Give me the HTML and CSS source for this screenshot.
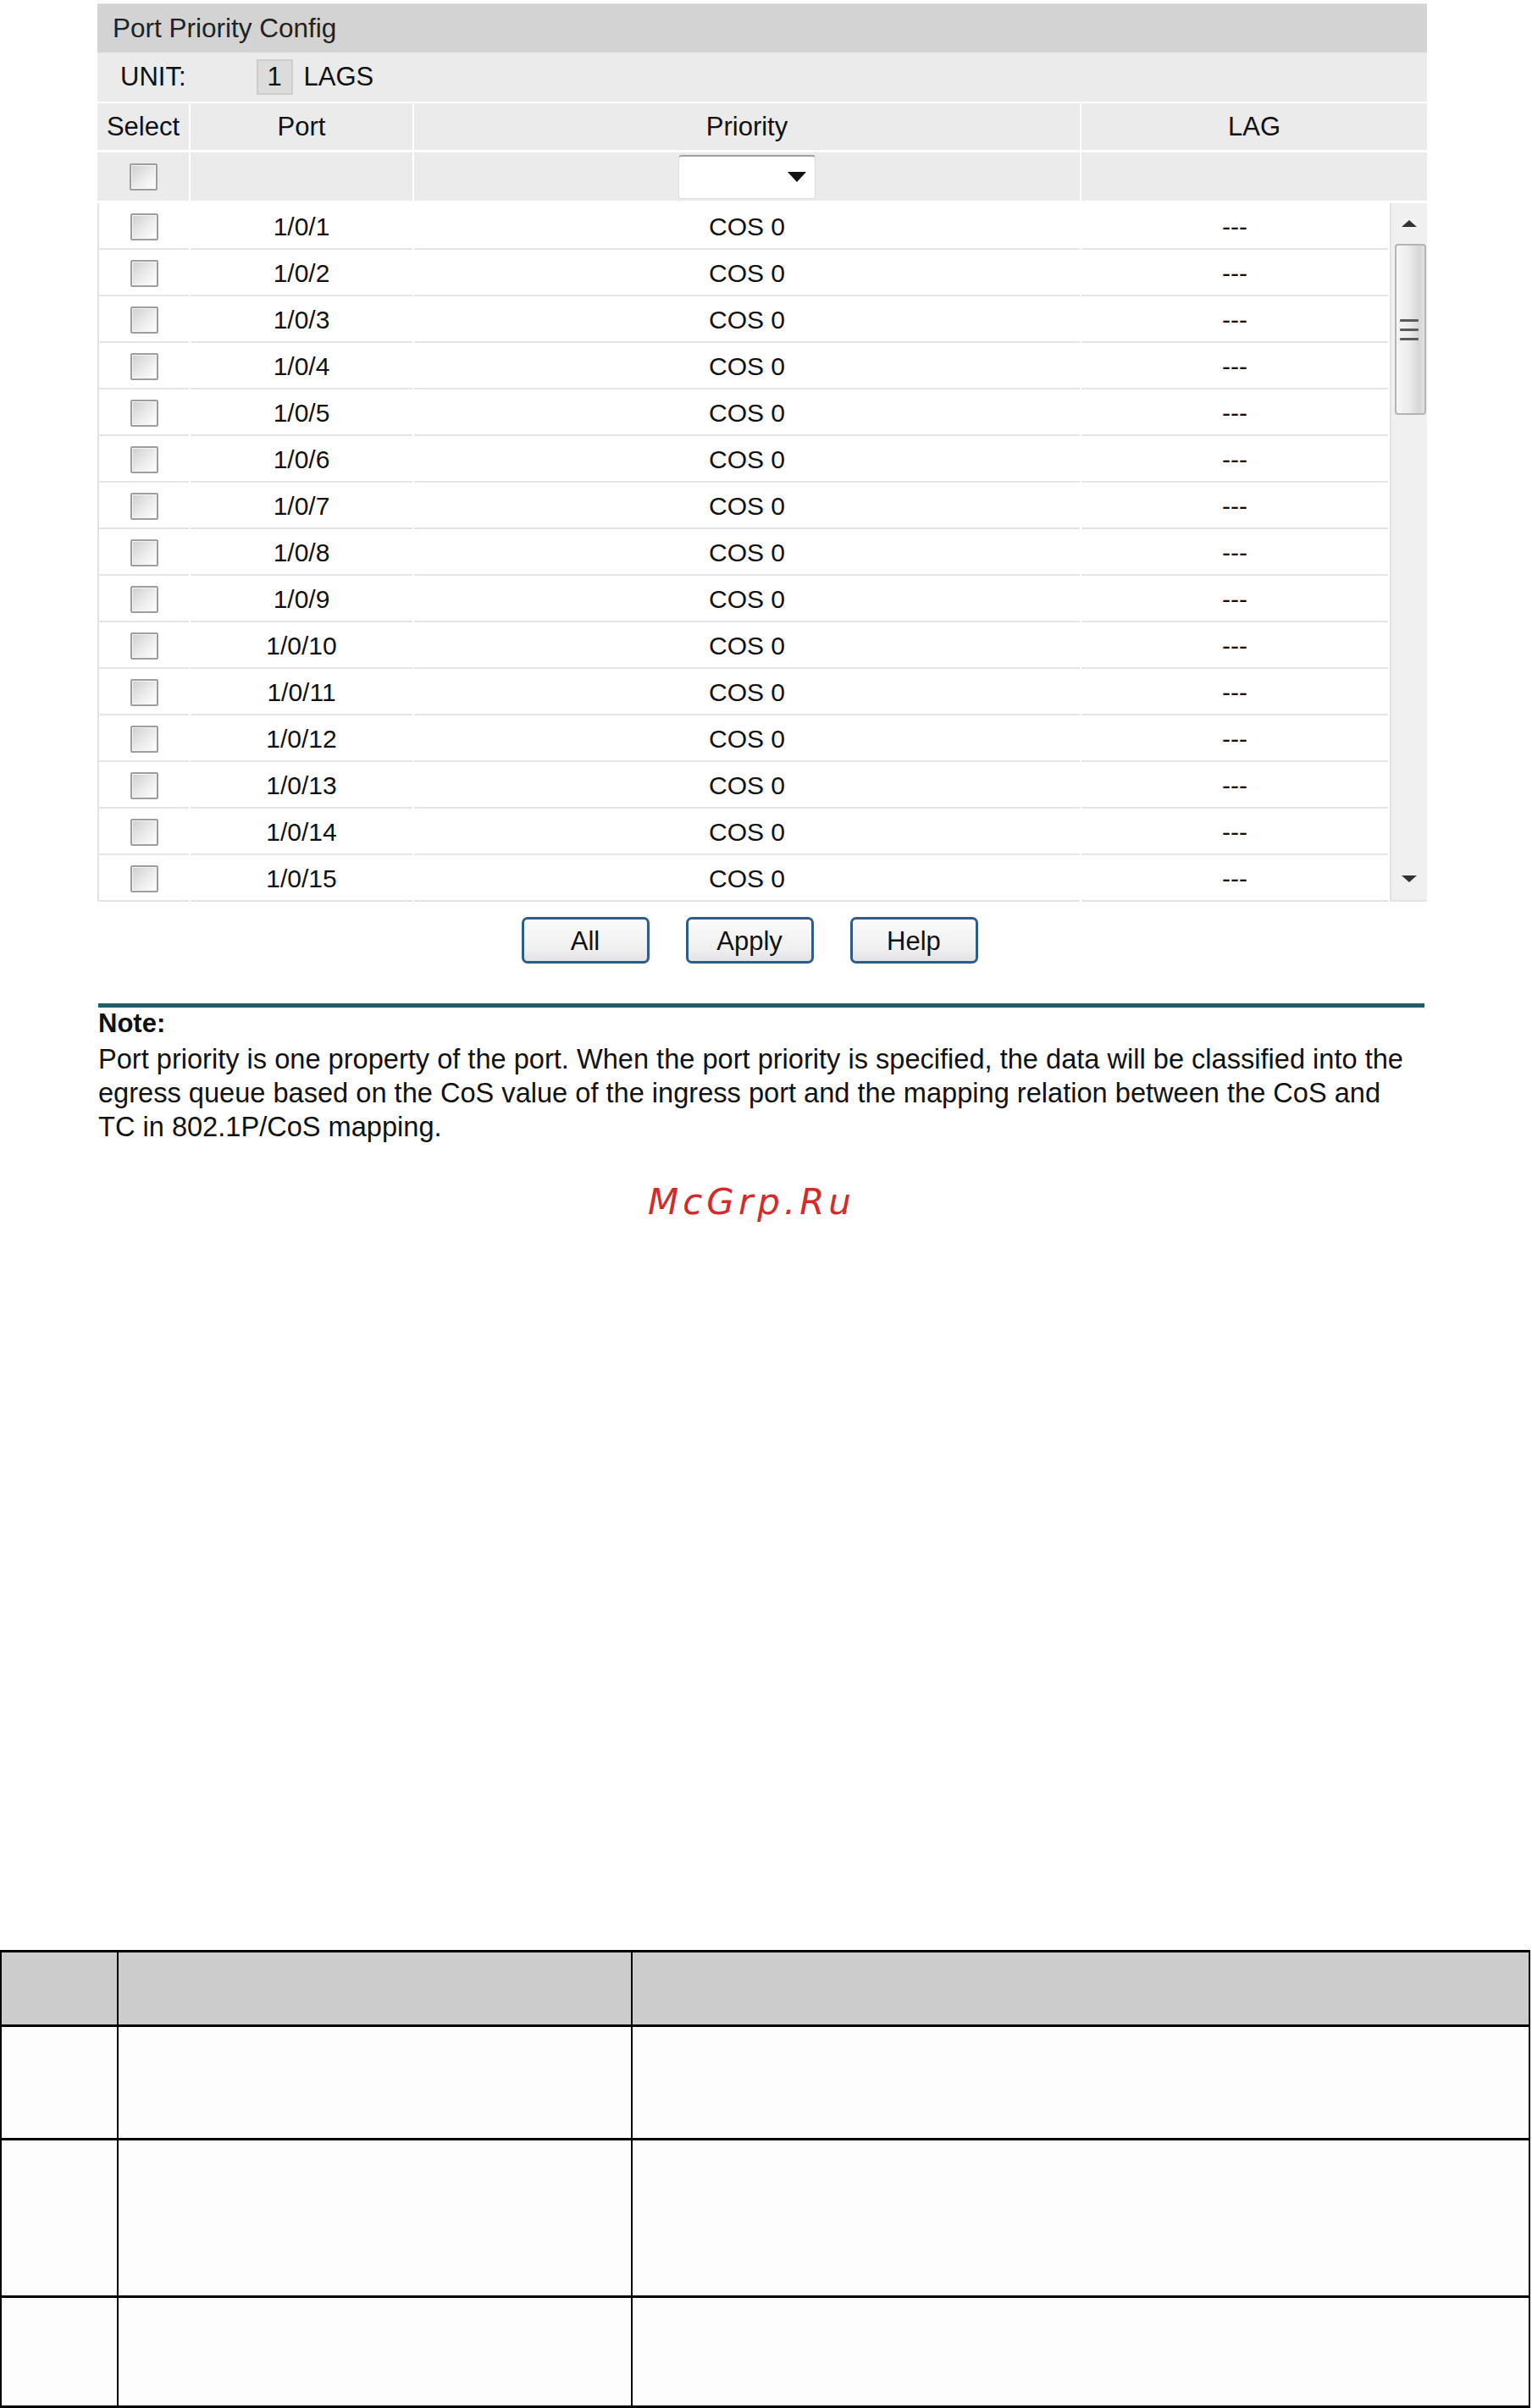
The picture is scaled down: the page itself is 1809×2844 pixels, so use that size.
FILE: index.html
```html
<!DOCTYPE html>
<html>
<head>
<meta charset="utf-8">
<title>Port Priority Config</title>
<link rel="stylesheet" href="styles.css">
</head>
<body>
<div class="page">
  <div class="panel">
    <div class="title">Port Priority Config</div>
    <div class="unit-row">
      <span class="unit-label">UNIT:</span>
      <span class="unit-box">1</span>
      <span class="lags">LAGS</span>
    </div>
    <div class="head">
      <div class="hcell">Select</div>
      <div class="hcell">Port</div>
      <div class="hcell">Priority</div>
      <div class="hcell">LAG</div>
      <div class="hcell tall"><span class="cb"></span></div>
      <div class="hcell tall"></div>
      <div class="hcell tall">
        <div class="select"><svg class="arrow" width="24" height="14" viewBox="0 0 24 14"><polygon points="1,1 23,1 12,13" fill="#111"/></svg></div>
      </div>
      <div class="hcell tall"></div>
    </div>
    <div class="body">
      <div class="rows">
        <div class="cell"><span class="cb"></span></div><div class="cell">1/0/1</div><div class="cell">COS 0</div><div class="cell">---</div>
        <div class="cell"><span class="cb"></span></div><div class="cell">1/0/2</div><div class="cell">COS 0</div><div class="cell">---</div>
        <div class="cell"><span class="cb"></span></div><div class="cell">1/0/3</div><div class="cell">COS 0</div><div class="cell">---</div>
        <div class="cell"><span class="cb"></span></div><div class="cell">1/0/4</div><div class="cell">COS 0</div><div class="cell">---</div>
        <div class="cell"><span class="cb"></span></div><div class="cell">1/0/5</div><div class="cell">COS 0</div><div class="cell">---</div>
        <div class="cell"><span class="cb"></span></div><div class="cell">1/0/6</div><div class="cell">COS 0</div><div class="cell">---</div>
        <div class="cell"><span class="cb"></span></div><div class="cell">1/0/7</div><div class="cell">COS 0</div><div class="cell">---</div>
        <div class="cell"><span class="cb"></span></div><div class="cell">1/0/8</div><div class="cell">COS 0</div><div class="cell">---</div>
        <div class="cell"><span class="cb"></span></div><div class="cell">1/0/9</div><div class="cell">COS 0</div><div class="cell">---</div>
        <div class="cell"><span class="cb"></span></div><div class="cell">1/0/10</div><div class="cell">COS 0</div><div class="cell">---</div>
        <div class="cell"><span class="cb"></span></div><div class="cell">1/0/11</div><div class="cell">COS 0</div><div class="cell">---</div>
        <div class="cell"><span class="cb"></span></div><div class="cell">1/0/12</div><div class="cell">COS 0</div><div class="cell">---</div>
        <div class="cell"><span class="cb"></span></div><div class="cell">1/0/13</div><div class="cell">COS 0</div><div class="cell">---</div>
        <div class="cell"><span class="cb"></span></div><div class="cell">1/0/14</div><div class="cell">COS 0</div><div class="cell">---</div>
        <div class="cell"><span class="cb"></span></div><div class="cell">1/0/15</div><div class="cell">COS 0</div><div class="cell">---</div>
      </div>
      <div class="scroll">
        <div class="sbtn"><svg width="20" height="10" viewBox="0 0 20 10"><polygon points="10,1 19,9 1,9" fill="#333"/></svg></div>
        <div class="thumb"><span class="grip"></span><span class="grip"></span><span class="grip"></span></div>
        <div class="track"></div>
        <div class="sbtn down"><svg width="20" height="10" viewBox="0 0 20 10"><polygon points="1,1 19,1 10,9" fill="#333"/></svg></div>
      </div>
    </div>
  </div>
  <div class="btns">
    <button class="btn">All</button>
    <button class="btn">Apply</button>
    <button class="btn">Help</button>
  </div>
  <div class="note">
    <div class="note-title">Note:</div>
    <div class="note-text">Port priority is one property of the port. When the port priority is specified, the data will be classified into the<br>egress queue based on the CoS value of the ingress port and the mapping relation between the CoS and<br>TC in 802.1P/CoS mapping.</div>
  </div>
  <div class="watermark">McGrp.Ru</div>
  <div class="params">
    <div class="pc ph"></div><div class="pc ph"></div><div class="pc ph"></div>
    <div class="pc"></div><div class="pc"></div><div class="pc"></div>
    <div class="pc"></div><div class="pc"></div><div class="pc"></div>
    <div class="pc"></div><div class="pc"></div><div class="pc"></div>
  </div>
</div>
</body>
</html>
```

FILE: styles.css
```css
* { box-sizing: border-box; }
html, body { margin: 0; padding: 0; background: #fff; }
body { font-family: "Liberation Sans", Arial, sans-serif; color: #111; }
.page { width: 1809px; height: 2844px; padding-top: 4px; overflow: hidden; }

.panel { margin-left: 115px; width: 1570px; }
.title {
  height: 58px; background: #d3d3d3; display: flex; align-items: center;
  padding-left: 18px; font-size: 31.5px; color: #222; border-top: 1px solid #e2e2e2;
}
.unit-row {
  height: 58px; background: #ebebeb; display: flex; align-items: center;
  padding-left: 27px; font-size: 31px; color: #111;
}
.unit-box {
  margin-left: 83px; width: 43px; height: 42px; background: #dcdcdc;
  border: 2px solid #cdcdcd; display: flex; align-items: center; justify-content: center;
}
.lags { margin-left: 13px; }

.head {
  display: grid; grid-template-columns: 108px 262px 786px 1fr;
  grid-template-rows: 55px 57px; gap: 3px 2px; padding-top: 2px; background: #fff;
}
.hcell {
  background: #ebebeb; display: flex; align-items: center; justify-content: center;
  font-size: 31px; color: #111;
}
.select {
  width: 162px; height: 52px; background: #fff; border: 1px solid #dedede;
  border-top: 2px solid #a0a0a0; border-radius: 4px; display: flex;
  align-items: center; justify-content: flex-end; padding-right: 9px;
}

.cb {
  display: block; width: 33px; height: 32px; border: 2px solid #9e9e9e; border-radius: 2px;
  background: linear-gradient(135deg, #cfcfcf 0%, #ececec 55%, #ffffff 100%);
  box-shadow: inset 0 0 0 1px #f6f6f6;
}

.body {
  display: flex; margin-top: 3px; border-left: 2px solid #e2e2e2; height: 825px;
}
.rows {
  flex: 1; display: grid; grid-template-columns: 106px 262px 786px 1fr;
  grid-auto-rows: 55px; column-gap: 2px;
}
.cell {
  border-bottom: 2px solid #e5e5e5; display: flex; align-items: center; justify-content: center;
  font-size: 30px; color: #111; padding-top: 2px;
}
.scroll {
  width: 44px; margin-left: 2px; border-left: 2px solid #e2e2e2; background: #f0f0f0;
  display: flex; flex-direction: column; align-items: center; border-bottom: 2px solid #e5e5e5;
}
.sbtn { height: 48px; width: 100%; display: flex; align-items: center; justify-content: center; }
.sbtn.down { height: 42px; align-items: flex-start; padding-top: 12px; }
.thumb {
  width: 37px; height: 202px; margin-left: 3px; border: 2px solid #b4b4b4; border-radius: 4px;
  background: linear-gradient(to right, #f6f6f6 0%, #ececec 45%, #d6d6d6 80%, #e2e2e2 100%);
  display: flex; flex-direction: column; align-items: center; justify-content: center; gap: 8px;
  padding-right: 4px;
}
.grip { display: block; width: 22px; height: 3px; background: #5a5a5a; border-radius: 1px; }
.track { flex: 1; }

.btns {
  margin-left: 115px; width: 1570px; margin-top: 18px; padding-right: 30px;
  display: flex; justify-content: center; gap: 43px;
}
.btn {
  width: 151px; height: 55px; border: 3px solid #2e5d8c; border-radius: 7px;
  background: linear-gradient(#fbfbfb 0%, #f0f0f0 70%, #e2e2e2 100%);
  font-family: "Liberation Sans", Arial, sans-serif; font-size: 31px; color: #111;
  padding: 3px 0 0 0;
}

.note { margin-left: 116px; width: 1566px; margin-top: 47px; border-top: 5px solid #1f5f69; }
.note-title { font-weight: bold; font-size: 31px; line-height: 38px; color: #111; }
.note-text { font-size: 32.6px; line-height: 40px; margin-top: 3px; color: #111; white-space: nowrap; }

.watermark {
  margin-top: 45px; text-align: center; padding-right: 34px; font-family: "DejaVu Sans", sans-serif;
  font-style: italic; font-size: 42px; line-height: 48px; letter-spacing: 5px; color: #d42a2a;
}

.params {
  margin-top: 859px; width: 1807px; display: grid;
  grid-template-columns: 138px 607px 1060px; grid-template-rows: 88px 134px 186px 130px;
  border-top: 3px solid #000; border-left: 2px solid #000;
}
.pc { border-right: 2px solid #000; border-bottom: 3px solid #000; background: #fdfdfd; }
.pc.ph { background: #cccccc; }
```
